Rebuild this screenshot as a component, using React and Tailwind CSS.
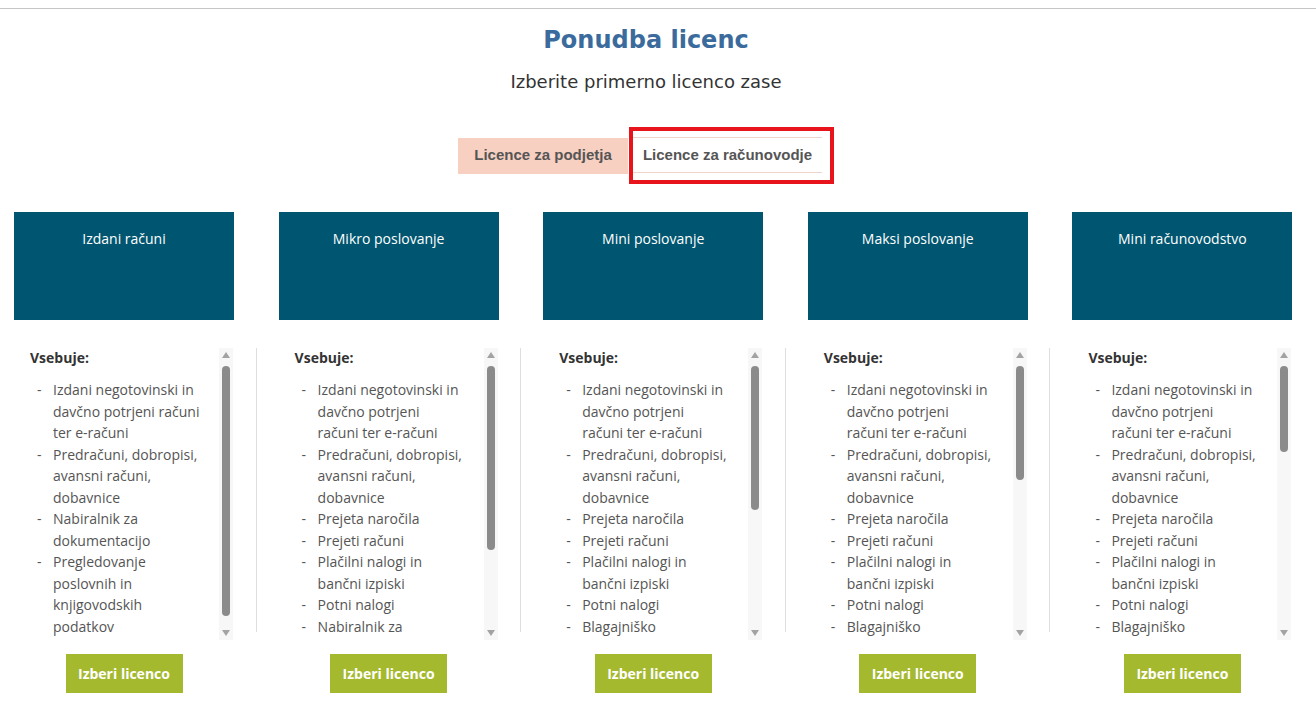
import React from 'react';

const base = [
  ['Izdani negotovinski in', 'davčno potrjeni', 'računi ter e-računi'],
  ['Predračuni, dobropisi,', 'avansni računi,', 'dobavnice'],
  ['Prejeta naročila'],
  ['Prejeti računi'],
  ['Plačilni nalogi in', 'bančni izpiski'],
  ['Potni nalogi'],
];

const plans = [
  {
    name: 'Izdani računi',
    thumb: 250,
    items: [
      ['Izdani negotovinski in', 'davčno potrjeni računi', 'ter e-računi'],
      ['Predračuni, dobropisi,', 'avansni računi,', 'dobavnice'],
      ['Nabiralnik za', 'dokumentacijo'],
      ['Pregledovanje', 'poslovnih in', 'knjigovodskih', 'podatkov'],
    ],
  },
  {
    name: 'Mikro poslovanje',
    thumb: 184,
    items: [...base, ['Nabiralnik za']],
  },
  {
    name: 'Mini poslovanje',
    thumb: 144,
    items: [...base, ['Blagajniško']],
  },
  {
    name: 'Maksi poslovanje',
    thumb: 114,
    items: [...base, ['Blagajniško']],
  },
  {
    name: 'Mini računovodstvo',
    thumb: 86,
    items: [...base, ['Blagajniško']],
  },
];

const FakeScrollbar = ({ thumb }) => (
  <div className="w-[14px] h-full bg-[#f7f7f7] flex flex-col items-center shrink-0">
    <svg width="8" height="6" viewBox="0 0 8 6" className="mt-[4px]">
      <path d="M4 0 L8 6 L0 6 Z" fill="#a3a3a3" />
    </svg>
    <div className="w-[8px] rounded-full bg-[#8b8b8b] mt-[8px]" style={{ height: thumb }} />
    <div className="flex-1" />
    <svg width="8" height="6" viewBox="0 0 8 6" className="mb-[4px]">
      <path d="M0 0 L8 0 L4 6 Z" fill="#a3a3a3" />
    </svg>
  </div>
);

const PlanColumn = ({ plan, first }) => (
  <div className="flex flex-col w-[220px]">
    <div className="h-[108px] bg-[#005670] text-white text-center text-[14px] leading-[20px] pt-[17px]">
      {plan.name}
    </div>
    <div className="flex mt-[28px] h-[292px]">
      {!first && <div className="w-px h-[284px] bg-[#dedede] -ml-[23px] mr-[22px] shrink-0" />}
      <div className="flex-1 overflow-hidden pl-[16px]">
        <div className="font-bold text-[14px] leading-[20px] text-[#333]">Vsebuje:</div>
        <ul className="mt-[11px] pl-[4px] text-[14px] leading-[21.5px] text-[#555]">
          {plan.items.map((lines, i) => (
            <li key={i} className="flex">
              <span className="w-[19px] shrink-0 pl-[3px]">-</span>
              <span className="whitespace-nowrap">
                {lines.map((l, j) => (
                  <React.Fragment key={j}>
                    {j > 0 && <br />}
                    {l}
                  </React.Fragment>
                ))}
              </span>
            </li>
          ))}
        </ul>
      </div>
      <div className="mr-[1px]">
        <FakeScrollbar thumb={plan.thumb} />
      </div>
    </div>
    <div className="flex justify-center mt-[14px]">
      <button className="w-[117px] h-[39px] bg-[#a5b92f] text-white font-bold text-[14px]">
        Izberi licenco
      </button>
    </div>
  </div>
);

export default function App() {
  return (
    <div className="w-[1316px] h-[702px] bg-white overflow-hidden font-['Open_Sans',sans-serif]">
      <div className="h-[8px]" />
      <div className="border-t border-[#c6c6c6]" />

      <div className="pr-[24px] flex flex-col items-center">
        <h1 className="mt-[16px] text-[24px] leading-[30px] font-bold text-[#3a6b9c] font-['Verdana','DejaVu_Sans',sans-serif]">
          Ponudba licenc
        </h1>
        <p className="mt-[15px] text-[18px] leading-[24px] text-[#333] font-['Verdana','DejaVu_Sans',sans-serif]">
          Izberite primerno licenco zase
        </p>

        <div className="mt-[33px] flex items-center font-['Liberation_Sans',Arial,sans-serif] font-bold text-[15px] text-[#555]">
          <div className="w-[170px] h-[36px] bg-[#f8d0c2] flex items-center justify-center">
            Licence za podjetja
          </div>
          <div className="ml-[1px] border-4 border-[#e8141c] pt-[6px] pb-[7px] pr-[8px]">
            <div className="w-[189px] h-[36px] border-y border-[#f0d4cb] flex items-center justify-center">
              Licence za računovodje
            </div>
          </div>
        </div>
      </div>

      <div className="mt-[28px] pl-[14px] grid grid-cols-[repeat(5,220px)] gap-x-[44.6px]">
        {plans.map((p, i) => (
          <PlanColumn key={p.name} plan={p} first={i === 0} />
        ))}
      </div>
    </div>
  );
}
